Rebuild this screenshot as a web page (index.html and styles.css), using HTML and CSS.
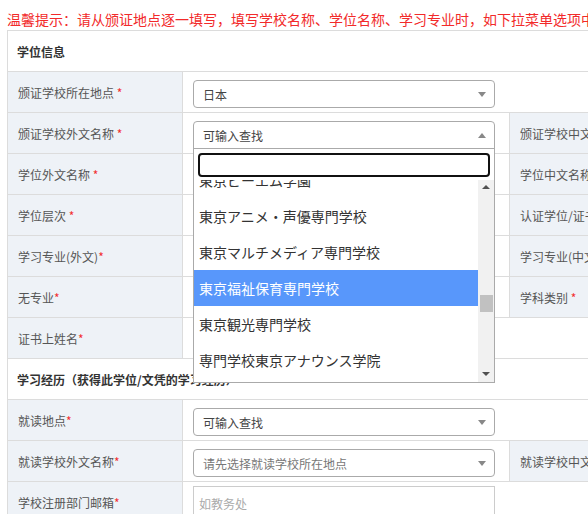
FILE: index.html
```html
<!DOCTYPE html>
<html lang="zh-CN">
<head>
<meta charset="utf-8">
<title>学位信息</title>
<link rel="stylesheet" href="styles.css">
</head>
<body>
<div class="notice">温馨提示：请从颁证地点逐一填写，填写学校名称、学位名称、学习专业时，如下拉菜单选项中没有相应选项，请选择“其他”后手动填写。</div>
<div class="form">
  <div class="cell section">学位信息</div>

  <div class="cell lbl">颁证学校所在地点 <span class="req">*</span></div>
  <div class="cell val wide"><div class="select">日本</div></div>

  <div class="cell lbl">颁证学校外文名称 <span class="req">*</span></div>
  <div class="cell val top">
    <div class="combo">
      <div class="select open">可输入查找</div>
      <div class="dropdown">
        <div class="search"><input type="text" aria-label="搜索"></div>
        <div class="results">
          <div class="opts">
            <ul lang="ja">
              <li class="opt">東京ビーエム学園</li>
              <li class="opt">東京アニメ・声優専門学校</li>
              <li class="opt">東京マルチメディア専門学校</li>
              <li class="opt hl">東京福祉保育専門学校</li>
              <li class="opt">東京観光専門学校</li>
              <li class="opt">専門学校東京アナウンス学院</li>
              <li class="opt">専門学校東京ビジュアルアーツ</li>
            </ul>
          </div>
          <div class="sbar">
            <span class="sb-up"></span>
            <span class="sb-thumb"></span>
            <span class="sb-down"></span>
          </div>
        </div>
      </div>
    </div>
  </div>
  <div class="cell lbl">颁证学校中文名称 <span class="req">*</span></div>
  <div class="cell val"></div>

  <div class="cell lbl">学位外文名称 <span class="req">*</span></div>
  <div class="cell val"></div>
  <div class="cell lbl">学位中文名称 <span class="req">*</span></div>
  <div class="cell val"></div>

  <div class="cell lbl">学位层次 <span class="req">*</span></div>
  <div class="cell val"></div>
  <div class="cell lbl">认证学位/证书 <span class="req">*</span></div>
  <div class="cell val"></div>

  <div class="cell lbl">学习专业(外文)<span class="req">*</span></div>
  <div class="cell val"></div>
  <div class="cell lbl">学习专业(中文)<span class="req">*</span></div>
  <div class="cell val"></div>

  <div class="cell lbl">无专业<span class="req">*</span></div>
  <div class="cell val"></div>
  <div class="cell lbl">学科类别 <span class="req">*</span></div>
  <div class="cell val"></div>

  <div class="cell lbl">证书上姓名<span class="req">*</span></div>
  <div class="cell val wide"></div>

  <div class="cell section">学习经历（获得此学位/文凭的学习经历）</div>

  <div class="cell lbl">就读地点<span class="req">*</span></div>
  <div class="cell val wide"><div class="select">可输入查找</div></div>

  <div class="cell lbl">就读学校外文名称<span class="req">*</span></div>
  <div class="cell val"><div class="select muted">请先选择就读学校所在地点</div></div>
  <div class="cell lbl">就读学校中文名称<span class="req">*</span></div>
  <div class="cell val"></div>

  <div class="cell lbl">学校注册部门邮箱<span class="req">*</span></div>
  <div class="cell val inp wide"><input class="input" type="text" placeholder="如教务处"></div>
</div>
</body>
</html>
```

FILE: styles.css
```css
html, body {
  margin: 0;
  padding: 0;
  overflow: hidden;
  width: 588px;
  height: 514px;
  background: #fff;
}

body {
  font-family: "Noto Sans CJK SC", "Noto Sans", sans-serif;
}

.notice {
  height: 30px;
  box-sizing: border-box;
  padding: 9px 0 0 7px;
  font-size: 14px;
  line-height: 20px;
  color: #f22a2a;
  white-space: nowrap;
  overflow: hidden;
}

.form {
  margin-left: 7px;
  display: grid;
  grid-template-columns: 175px 327px 175px 327px;
  width: max-content;
  border-left: 1px solid #dcdcdc;
  border-top: 1px solid #dcdcdc;
}

.cell {
  height: 41px;
  box-sizing: border-box;
  border-right: 1px solid #dcdcdc;
  border-bottom: 1px solid #dcdcdc;
}

.section {
  grid-column: 1 / -1;
  padding-left: 9px;
  line-height: 41px;
  font-size: 12px;
  font-weight: 700;
  color: #333;
  background: #fff;
}

.lbl {
  padding: 1px 0 0 10px;
  line-height: 40px;
  background: #eef2f7;
  font-size: 12px;
  color: #555;
  white-space: nowrap;
  overflow: hidden;
}

.req {
  color: #f23030;
}

.val {
  padding: 8px 0 0 10px;
  background: #fff;
}

.wide {
  grid-column: span 3;
}

.val.inp {
  padding-top: 4px;
}

.combo {
  position: relative;
  width: 302px;
  z-index: 5;
}

.select {
  position: relative;
  width: 302px;
  height: 28px;
  box-sizing: border-box;
  border: 1px solid #aaa;
  border-radius: 4px;
  padding: 1px 0 0 9px;
  display: flex;
  align-items: center;
  font-size: 12px;
  color: #444;
  background: #fff;
}

.select.muted {
  color: #777;
}

.select::after {
  content: "";
  position: absolute;
  right: 8px;
  top: 11px;
  border-style: solid;
  border-width: 5px 4px 0 4px;
  border-color: #888 transparent transparent transparent;
}

.select.open {
  border-radius: 4px 4px 0 0;
}

.select.open::after {
  border-width: 0 4px 5px 4px;
  border-color: transparent transparent #888 transparent;
}

.dropdown {
  position: absolute;
  left: 0;
  top: 27px;
  width: 302px;
  box-sizing: border-box;
  border: 1px solid #aaa;
  border-top: none;
  background: #fff;
}

.search {
  padding: 4px 4px 3px 4px;
  border-top: 1px solid #aaa;
}

.search input {
  display: block;
  width: 100%;
  height: 24px;
  box-sizing: border-box;
  border: 2px solid #111;
  border-radius: 4px;
  outline: none;
  padding: 0 4px;
  margin: 0;
}

.results {
  display: flex;
  height: 202px;
}

.opts {
  flex: 1;
  overflow: hidden;
}

.opts ul {
  list-style: none;
  margin: -18px 0 0 0;
  padding: 0;
}

.opt {
  height: 36px;
  line-height: 36px;
  padding-left: 5px;
  font-family: "Noto Sans CJK JP", "Noto Sans CJK SC", sans-serif;
  font-size: 14px;
  color: #333;
  white-space: nowrap;
}

.opt.hl {
  background: #5897fb;
  color: #fff;
}

.sbar {
  position: relative;
  width: 16px;
  background: #f1f1f1;
}

.sb-up,
.sb-down {
  position: absolute;
  left: 4px;
  border-style: solid;
}

.sb-up {
  top: 5px;
  border-width: 0 4px 4px 4px;
  border-color: transparent transparent #505050 transparent;
}

.sb-down {
  bottom: 6px;
  border-width: 4px 4px 0 4px;
  border-color: #505050 transparent transparent transparent;
}

.sb-thumb {
  position: absolute;
  left: 2px;
  right: 1px;
  top: 115px;
  height: 17px;
  background: #c1c1c1;
}

.input {
  display: block;
  width: 302px;
  height: 34px;
  box-sizing: border-box;
  border: 1px solid #ccc;
  padding: 0 0 0 5px;
  margin: 0;
  font-family: "Noto Sans CJK SC", sans-serif;
  font-size: 12px;
  color: #333;
  outline: none;
}

.input::placeholder {
  color: #aaa;
}
```
